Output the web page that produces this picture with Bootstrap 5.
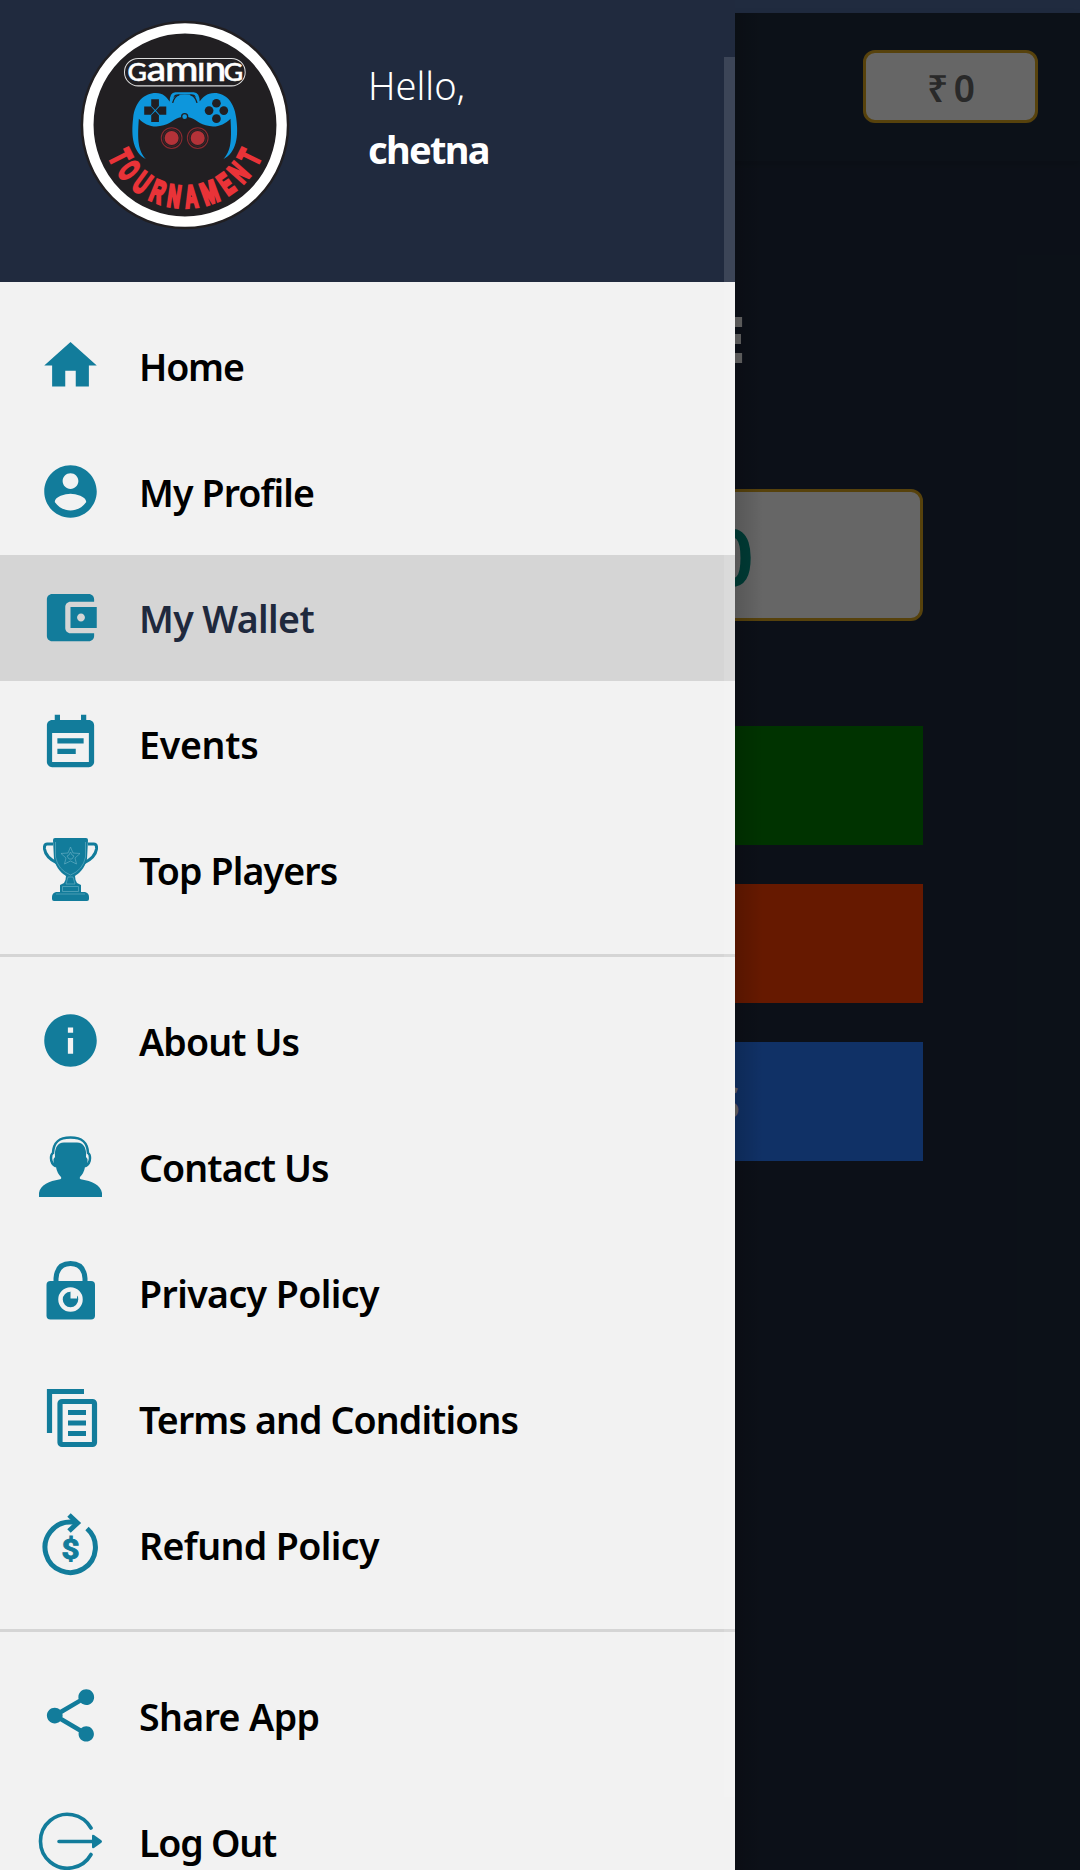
<!DOCTYPE html>
<html lang="en">
<head>
<meta charset="utf-8">
<meta name="viewport" content="width=device-width, initial-scale=1">
<title>Gaming Tournament</title>
<link href="https://cdn.jsdelivr.net/npm/bootstrap@5.3.0/dist/css/bootstrap.min.css" rel="stylesheet">
<style>
  html, body { height: 1870px; overflow: hidden; }
  body { background: #1f293d; font-family: "Noto Sans", "Open Sans", sans-serif; }
  .screen { width: 1080px; height: 1870px; overflow: hidden; background: #1f2a3d; }
  .status-strip { height: 13px; background: #202b3f; }
  .app-top { height: 148px; padding: 0 42px 1px 0; background: #1f2b3e; box-shadow: 0 3px 8px rgba(0,0,0,.12); }
  .coin-pill { width: 175px; height: 73px; border: 3px solid #daa520; border-radius: 12px; background: #fff; color: #666; font-size: 37px; font-weight: 600; letter-spacing: -1px; word-spacing: -2px; padding-top: 2px; }
  .page-body { width: 766px; }
  .page-title { height: 120px; margin-top: 118px; padding-right: 178px; font-size: 63px; font-weight: 900; color: #fff; line-height: 120px; }
  .amount-card { height: 132px; margin-top: 90px; padding-right: 166px; border: 3px solid #daa520; border-radius: 12px; background: #fff; color: #009688; font-size: 80px; font-weight: 600; }
  .block-btn { height: 119px; border-radius: 0; border: 0; color: #fff; font-size: 45px; font-weight: 600; padding-right: 183px; }
  .green-btn { background: #008000; margin-top: 105px; }
  .red-btn { background: #ff4000; margin-top: 39px; }
  .blue-btn { background: #2a7aff; margin-top: 39px; }
  .dimmer { top: 13px; left: 0; right: 0; bottom: 0; background: rgba(0,0,0,.6); }
  .side-drawer { top: 0; left: 0; width: 735px; height: 1870px; background: #f2f2f2; }
  .drawer-edge { top: 13px; left: 735px; width: 28px; height: 1857px; background: linear-gradient(90deg, rgba(0,0,0,.15), transparent); }
  .drawer-head { height: 282px; background: #202a3e; padding-left: 80px; }
  .logo-pic { width: 210px; height: 210px; margin-top: 19.5px; }
  .greet { margin-left: 78px; padding-top: 53px; color: #fff; font-size: 38px; line-height: 64px; }
  .greet-hi { font-weight: 300; }
  .greet-name { font-weight: 700; letter-spacing: -1.7px; }
  .menu-group { padding: 21px 0; }
  .menu-group + .menu-group { border-top: 3px solid #d5d5d5; }
  .menu-row { height: 126px; padding-left: 39px; color: #000; font-size: 37.5px; font-weight: 600; text-decoration: none; }
  .menu-row span { margin-left: 37px; padding-top: 2px; white-space: nowrap; letter-spacing: -.6px; }
  .menu-row .ls-tight { letter-spacing: -1.2px; }
  .menu-row .ls-snug { letter-spacing: -.88px; }
  .menu-row .ls-slight { letter-spacing: -.25px; }
  .menu-row svg { width: 63px; height: 63px; margin-bottom: 2px; fill: #127c9b; flex: none; overflow: visible; }
  .menu-row.current { background: #d5d5d5; color: #1f293d; }
  .scroll-thumb { top: 57px; right: 0; width: 11px; height: 1740px; background: rgba(255,255,255,.13); }
</style>
</head>
<body>
<div class="screen position-relative">
  <div class="status-strip"></div>
  <header class="app-top d-flex align-items-center justify-content-end">
    <div class="coin-pill d-flex align-items-center justify-content-center">₹ 0</div>
  </header>
  <main class="page-body mx-auto d-flex flex-column">
    <div class="page-title text-end">E</div>
    <div class="amount-card d-flex align-items-center justify-content-end">0</div>
    <button class="btn block-btn green-btn" aria-label="Add"></button>
    <button class="btn block-btn red-btn" aria-label="Withdraw"></button>
    <button class="btn block-btn blue-btn text-end">S</button>
  </main>
  <div class="dimmer position-absolute"></div>
  <div class="drawer-edge position-absolute"></div>

  <aside class="side-drawer position-absolute">
    <div class="drawer-head d-flex align-items-start">
      <svg class="logo-pic" viewBox="60 60 628 628">
        <circle cx="374" cy="374" r="312" fill="#211f22"/>
        <circle cx="374" cy="374" r="289" fill="none" stroke="#fff" stroke-width="31"/>
        <rect x="193" y="175" width="361" height="82" rx="41" fill="none" stroke="#ddd" stroke-width="3"/>
        <g font-family="Lato" font-weight="500" font-size="104" fill="#fff" stroke="#fff" stroke-width="1.500">
          <text x="202" y="241" font-size="76" textLength="58" lengthAdjust="spacingAndGlyphs">G</text>
          <text x="260" y="241" textLength="58" lengthAdjust="spacingAndGlyphs">a</text>
          <text x="314" y="241" textLength="100" lengthAdjust="spacingAndGlyphs">m</text>
          <text x="410" y="241">ı</text>
          <text x="433" y="241" textLength="64" lengthAdjust="spacingAndGlyphs">n</text>
          <text x="490" y="241" font-size="76" textLength="58" lengthAdjust="spacingAndGlyphs">G</text>
        </g>
        <g fill="#0d96dc">
          <path d="M328 306Q328 276 345 276H400Q418 276 418 306L409 309Q408 283 398 283H348Q338 283 337 309Z"/>
          <path d="M257 476C219 455 212 409 219 352C224 306 251 278 287 278C309 278 320 291 328 304C337 297 338 283 373 283C408 283 409 297 418 304C426 291 440 278 462 278C496 278 522 306 527 352C535 409 528 455 489 476C512 450 514 420 510 355C491 374 466 384 436 375C409 367 401 349 373 349C345 349 337 367 310 375C280 384 254 374 236 355C231 420 234 450 257 476Z"/>
        </g>
        <path d="M337 308Q343 286 357 284M410 308Q404 286 390 284" fill="none" stroke="#211f22" stroke-width="4"/>
        <g fill="#211f22">
          <path d="M273 297h23v20l-11 12l-12-12zM273 365h23v-20l-11-12l-12 12zM252 319h20l11 12l-11 12h-20zM318 319h-20l-11 12l11 12h20z"/>
          <circle cx="468" cy="309" r="13"/><circle cx="446" cy="331" r="13"/><circle cx="490" cy="331" r="13"/><circle cx="468" cy="355" r="13"/>
        </g>
        <circle cx="373" cy="349" r="9" fill="#0d96dc" stroke="#211f22" stroke-width="4"/>
        <g fill="#b43238"><circle cx="334" cy="413" r="21"/><circle cx="412" cy="413" r="21"/></g>
        <g fill="none" stroke="#8c2a30" stroke-width="3">
          <circle cx="334" cy="413" r="31"/><circle cx="412" cy="413" r="31"/><circle cx="334" cy="413" r="25" stroke-width="1"/><circle cx="412" cy="413" r="25" stroke-width="1"/>
        </g>
        <g transform="translate(374 374)" fill="#e93338" stroke="#e93338" stroke-width="9" font-family="Liberation Sans" font-weight="700" font-size="93" text-anchor="middle">
          <text transform="rotate(63.500) translate(0 247) scale(.6 1)">T</text>
          <text transform="rotate(51) translate(0 247) scale(.54 1)">O</text>
          <text transform="rotate(36.500) translate(0 247) scale(.58 1)">U</text>
          <text transform="rotate(22) translate(0 247) scale(.6 1)">R</text>
          <text transform="rotate(8.500) translate(0 247) scale(.58 1)">N</text>
          <text transform="rotate(-5) translate(0 247) scale(.58 1)">A</text>
          <text transform="rotate(-20) translate(0 247) scale(.64 1)">M</text>
          <text transform="rotate(-35) translate(0 247) scale(.56 1)">E</text>
          <text transform="rotate(-48.500) translate(0 247) scale(.58 1)">N</text>
          <text transform="rotate(-63.500) translate(0 247) scale(.6 1)">T</text>
        </g>
      </svg>
      <div class="greet">
        <div class="greet-hi">Hello,</div>
        <div class="greet-name">chetna</div>
      </div>
    </div>

    <nav>
      <div class="menu-group">
        <a class="menu-row d-flex align-items-center"><svg viewBox="0 0 24 24"><path d="M10 20v-6h4v6h5v-8h3L12 3 2 12h3v8z"/></svg><span class="ls-tight">Home</span></a>
        <a class="menu-row d-flex align-items-center"><svg viewBox="0 0 24 24"><path d="M12 2C6.480 2 2 6.480 2 12s4.480 10 10 10 10-4.480 10-10S17.520 2 12 2zm0 3c1.660 0 3 1.340 3 3s-1.340 3-3 3-3-1.340-3-3 1.340-3 3-3zm0 14.200c-2.500 0-4.710-1.280-6-3.220.030-1.990 4-3.080 6-3.080 1.990 0 5.970 1.090 6 3.080-1.290 1.940-3.500 3.220-6 3.220z"/></svg><span class="ls-snug">My Profile</span></a>
        <a class="menu-row current d-flex align-items-center"><svg viewBox="0 0 24 24"><path d="M21 18v1c0 1.100-.9 2-2 2H5c-1.110 0-2-.9-2-2V5c0-1.100.890-2 2-2h14c1.100 0 2 .9 2 2v1h-9c-1.110 0-2 .9-2 2v8c0 1.100.890 2 2 2h9zm-9-2h10V8H12v8zm4-2.500c-.830 0-1.500-.670-1.500-1.500s.670-1.500 1.500-1.500 1.500.670 1.500 1.500-.670 1.500-1.500 1.500z"/></svg><span>My Wallet</span></a>
        <a class="menu-row d-flex align-items-center"><svg viewBox="0 0 24 24"><path d="M17 10H7v2h10v-2zm2-7h-1V1h-2v2H8V1H6v2H5c-1.110 0-1.990.9-1.990 2L3 19c0 1.100.890 2 2 2h14c1.100 0 2-.9 2-2V5c0-1.100-.9-2-2-2zm0 16H5V8h14v11zm-5-5H7v2h7v-2z"/></svg><span class="ls-slight">Events</span></a>
        <a class="menu-row d-flex align-items-center"><svg viewBox="0 0 63 63">
          <path d="M14 2Q14 0 16 0H47Q49 0 49 2L48 21C46 31 39 36 36 38Q36 42 38 45L42 47V54H46Q50 55 50 59V61Q50 63 48 63H15Q13 63 13 61V59Q13 55 17 54H21V47L25 45Q27 42 27 38C24 36 17 31 15 21Z"/>
          <path d="M14 6H8Q5 6 5.500 11C6.500 18 12 22 18 25M49 6H55Q58 6 57.500 11C56.500 18 51 22 45 25" fill="none" stroke="#127c9b" stroke-width="3"/>
          <path d="M16.500 4V19Q19 32 31.500 37Q44 32 46.500 19V4M31.500 9L34 15L41 15.500L36 20L37.500 26L31.500 23L25.500 26L27 20L22 15.500L29 15ZM31.500 14L33 17L35 18L33 21H30L28 18L30 17ZM29 39H34L36 46H27ZM23.500 48.500H39.500V53.500H23.500ZM17 56H46" fill="none" stroke="#6fb4c8" stroke-width=".6"/>
        </svg><span class="ls-snug">Top Players</span></a>
      </div>
      <div class="menu-group">
        <a class="menu-row d-flex align-items-center"><svg viewBox="0 0 24 24"><path d="M12 2C6.480 2 2 6.480 2 12s4.480 10 10 10 10-4.480 10-10S17.520 2 12 2zm1 15h-2v-6h2v6zm0-8h-2V7h2v2z"/></svg><span class="ls-snug">About Us</span></a>
        <a class="menu-row d-flex align-items-center"><svg viewBox="0 0 63 63">
          <path d="M0 62V58C1 50 11 46 20 44.500Q23 44 22 42Q18 38 17 32Q14 31 14.500 24L16 22Q15 8 25 7.500H38Q48 8 47 22L48.500 24Q49 31 46 32Q45 38 41 42Q40 44 43 44.500C52 46 62 50 63 58V62Z"/>
          <path d="M17 31.500Q12 29 12 23Q12 19 14 18C14.500 7 20 2.500 31.500 2.500S48.500 7 49 18Q51 19 51 23Q51 29 46 31.500" fill="none" stroke="#127c9b" stroke-width="2.500"/>
        </svg><span class="ls-snug">Contact Us</span></a>
        <a class="menu-row d-flex align-items-center"><svg viewBox="0 1.500 63 63">
          <rect x="7.500" y="21.500" width="48.500" height="38.500" rx="4"/>
          <path d="M17 23V19Q18 4 31.500 4T46 19V23" fill="none" stroke="#127c9b" stroke-width="5"/>
          <circle cx="31.500" cy="40" r="10" fill="none" stroke="#f2f2f2" stroke-width="4.500"/>
          <path d="M31.500 39V32H38V39Z" fill="#f2f2f2"/>
        </svg><span>Privacy Policy</span></a>
        <a class="menu-row d-flex align-items-center"><svg viewBox="0 4 63 63">
          <path d="M10.500 50V8.500H45" fill="none" stroke="#127c9b" stroke-width="5.200"/>
          <rect x="21" y="18.500" width="34.500" height="43" rx="2" fill="none" stroke="#127c9b" stroke-width="5.200"/>
          <path d="M29 27h18v5H29zM29 37.500h18v5H29zM29 48h18v5H29z"/>
        </svg><span class="ls-snug">Terms and Conditions</span></a>
        <a class="menu-row d-flex align-items-center"><svg viewBox="0 -.5 63 63">
          <g fill="none" stroke="#127c9b" stroke-width="5"><path d="M48 15A25.200 25.200 0 1 1 31.500 8.600H38"/><path d="M30 1.500L38.500 9.500L30 17.500"/></g>
          <text x="31.500" y="45" text-anchor="middle" font-family="Roboto" font-weight="700" font-size="27" stroke="#127c9b" stroke-width="1" textLength="18" lengthAdjust="spacingAndGlyphs">$</text>
        </svg><span>Refund Policy</span></a>
      </div>
      <div class="menu-group">
        <a class="menu-row d-flex align-items-center"><svg viewBox="0 0 24 24"><path d="M18 16.080c-.760 0-1.440.3-1.960.770L8.910 12.700c.050-.230.090-.460.090-.700s-.040-.470-.090-.700l7.050-4.110c.540.500 1.250.810 2.040.810 1.660 0 3-1.340 3-3s-1.340-3-3-3-3 1.340-3 3c0 .240.040.470.090.700L8.040 9.810C7.500 9.310 6.790 9 6 9c-1.660 0-3 1.340-3 3s1.340 3 3 3c.790 0 1.500-.310 2.040-.810l7.120 4.160c-.050.210-.080.430-.080.650 0 1.610 1.310 2.920 2.920 2.920 1.610 0 2.920-1.310 2.920-2.920s-1.310-2.920-2.920-2.920z"/></svg><span>Share App</span></a>
        <a class="menu-row d-flex align-items-center"><svg viewBox="0 0 63 63">
          <path d="M52 18A27 27 0 1 0 52 44.500M20 31.500H55" fill="none" stroke="#127c9b" stroke-width="3.600" stroke-linecap="round"/>
          <path d="M53 26Q53 24 55 25L62 30Q64 31.500 62 33L55 38Q53 39 53 37Z"/>
        </svg><span class="ls-tight">Log Out</span></a>
      </div>
    </nav>
    <div class="scroll-thumb position-absolute"></div>
  </aside>
</div>
<script src="https://cdn.jsdelivr.net/npm/bootstrap@5.3.0/dist/js/bootstrap.bundle.min.js"></script>
</body>
</html>
